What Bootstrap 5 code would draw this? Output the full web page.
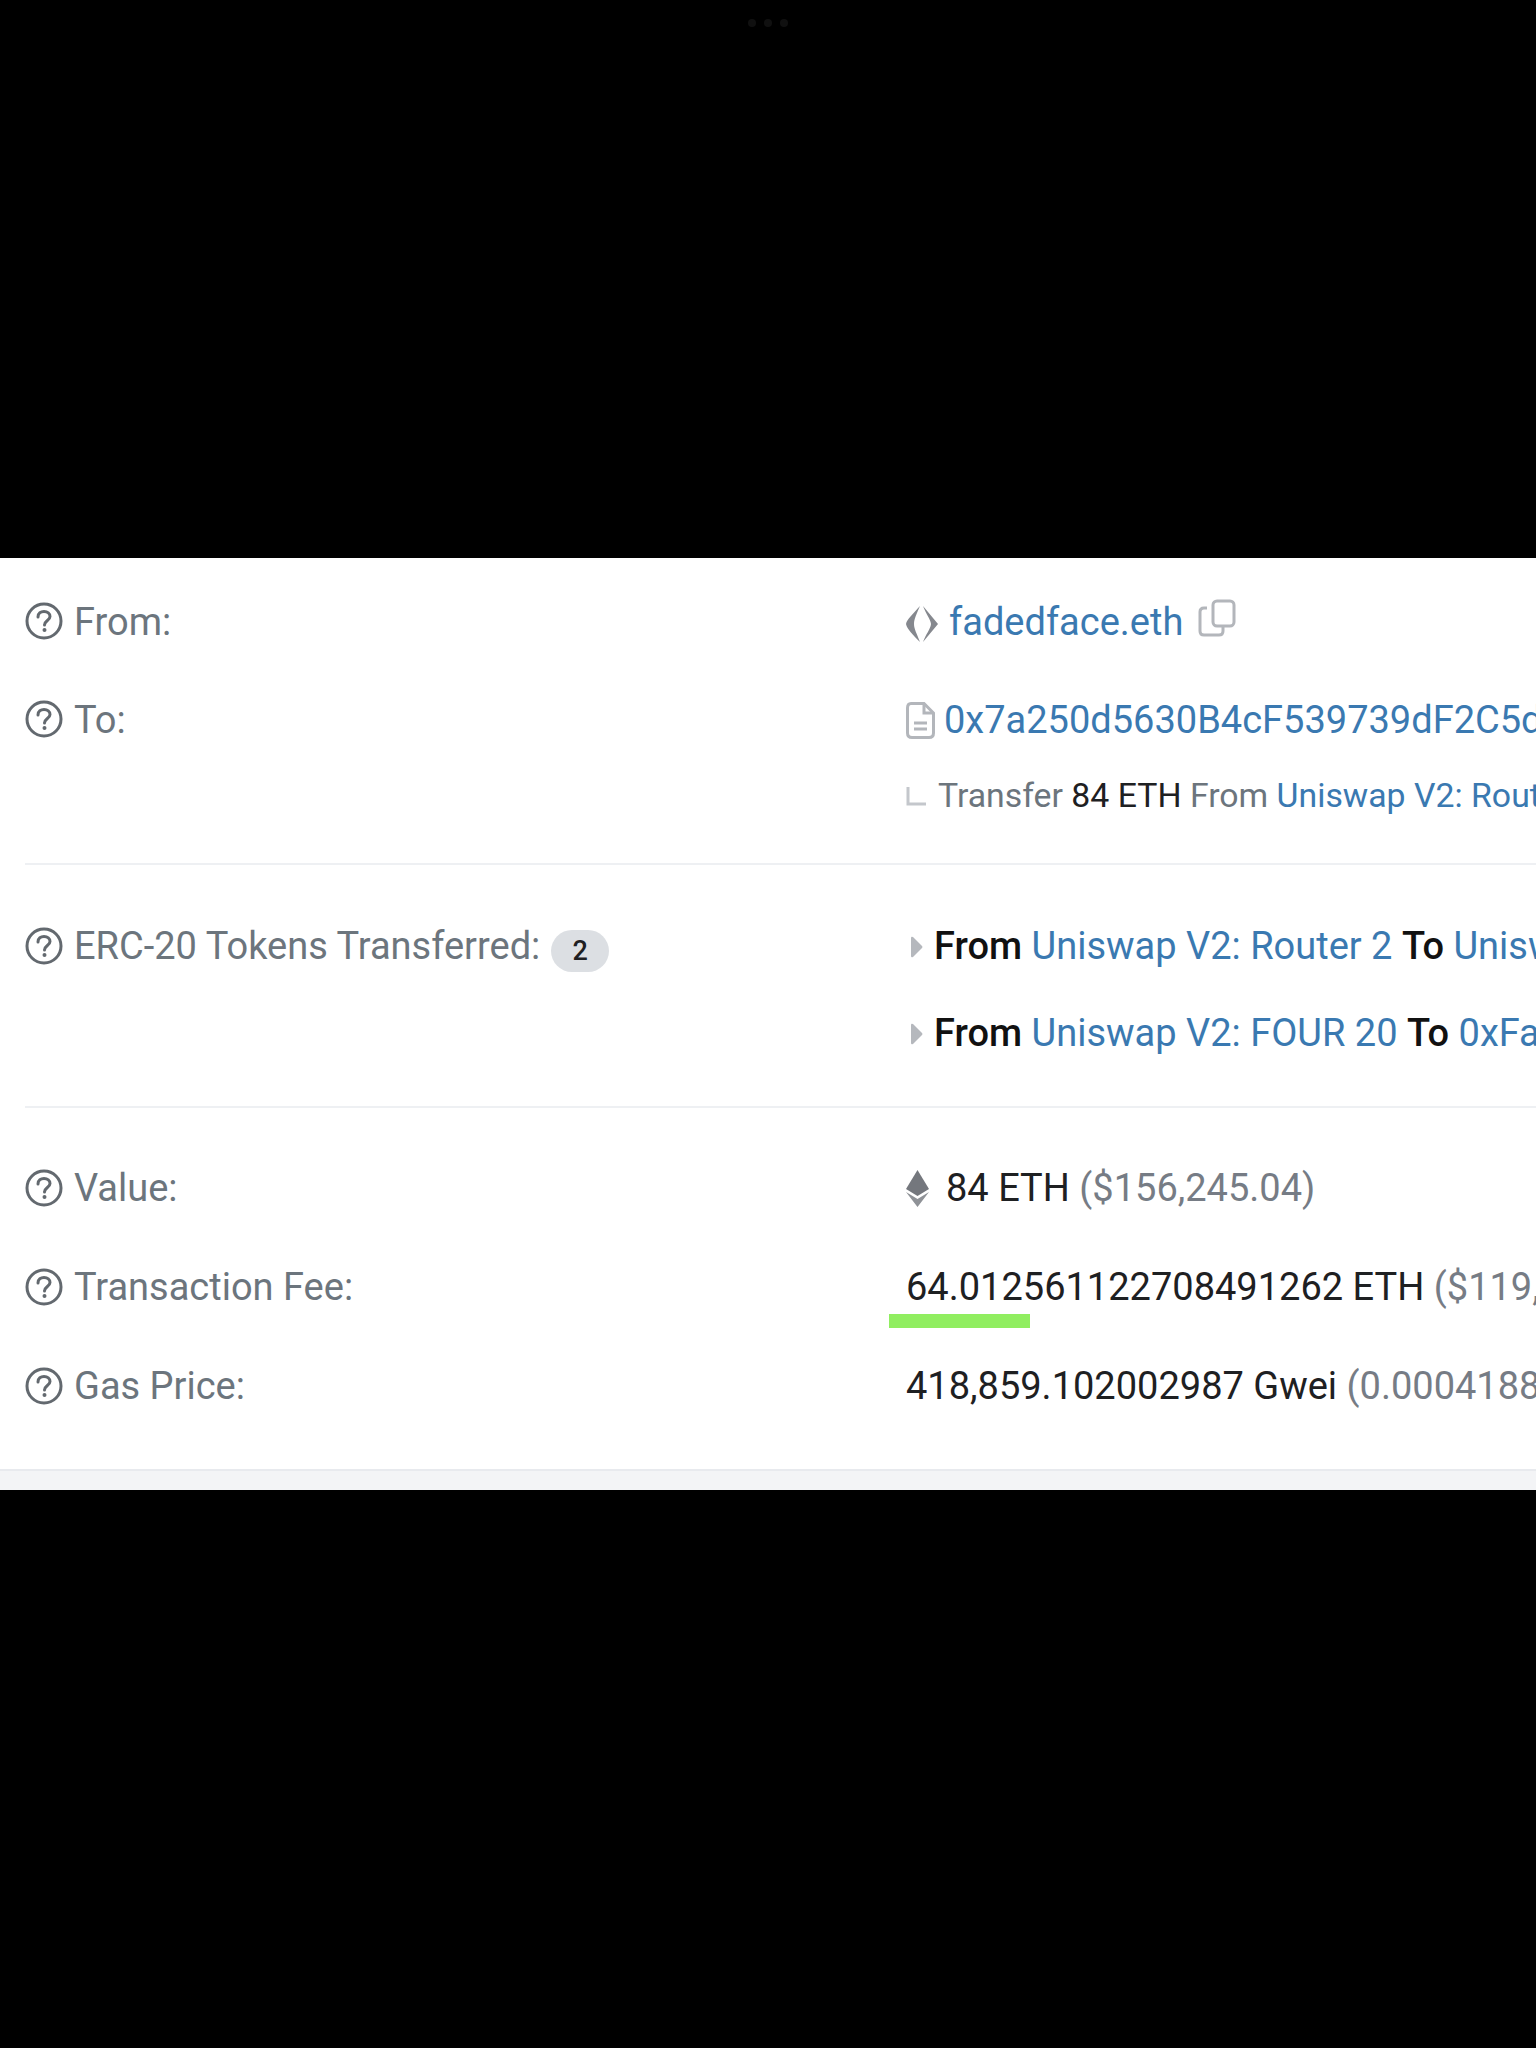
<!DOCTYPE html>
<html lang="en">
<head>
  <meta charset="UTF-8">
  <meta name="viewport" content="width=device-width, initial-scale=1.0">
  <title>Transaction details</title>
  <link rel="stylesheet" href="https://cdn.jsdelivr.net/npm/bootstrap@5.3.0/dist/css/bootstrap.min.css">
  <style>
    body { background: #000; font-family: Roboto, "Liberation Sans", sans-serif; font-size: 38px; color: #1e2022; }
    .top-black { height: 558px; padding-top: 19px; }
    .dot { width: 8px; height: 8px; border-radius: 50%; background: #101010; }
    .tx-card { background: #fff; padding-top: 15px; overflow: hidden; }
    .tx-row { height: 98px; }
    .tx-row-last { height: 99px; }
    .tx-row-sub { height: 54px; margin-bottom: 40px; }
    .tx-row-token { height: 87px; }
    .tx-gap-a { margin-bottom: 38px; }
    .tx-gap-b { margin-bottom: 29px; }
    .tx-gap-c { margin-bottom: 31px; }
    .tx-label { flex: 0 0 906px; padding-left: 25px; color: #6c757d; display: flex; align-items: center; gap: 11px; }
    .tx-label-inner { display: flex; align-items: center; gap: 11px; }
    .tx-label svg { flex: none; margin-top: -2px; }
    .tx-value { display: flex; align-items: center; white-space: nowrap; }
    a { color: #3a79b1; text-decoration: none; }
    .muted { color: #767c85; }
    .tx-line { height: 2px; background: #eef0f3; margin-left: 25px; }
    .ico-gray { flex: none; }
    .ico-ens { margin: 3px 11px 0 0; }
    .ico-copy { margin: -8px 0 0 15px; }
    .ico-file { margin-right: 9px; }
    .ico-corner { margin: 0 12px 0 0; }
    .ico-arrow { margin: 0 11px 0 4px; }
    .ico-eth { margin-right: 17px; }
    .tx-sub-text { font-size: 33.8px; color: #6c757d; }
    .tx-sub-text b { font-weight: 400; color: #1e2022; }
    .tx-strong { font-weight: 500; color: #111; }
    .count-pill { background: #dcdfe3; color: #1e2022; font-size: 27px; font-weight: 500; width: 58px; height: 42px; border-radius: 21px; display: flex; align-items: center; justify-content: center; margin-top: 9px; }
    .green-mark { position: absolute; left: -17px; top: 55px; width: 141px; height: 14px; background: #90ee60; }
    .tx-fee { position: relative; }
    .tx-spacer { height: 33px; }
    .tx-foot { height: 21px; background: #f3f4f6; border-top: 2px solid #e8eaee; }
  </style>
</head>
<body>
  <div class="top-black d-flex justify-content-center gap-2">
    <span class="dot"></span><span class="dot"></span><span class="dot"></span>
  </div>

  <div class="tx-card">
    <div class="d-flex tx-row">
      <div class="tx-label">
        <svg width="38" height="38" viewBox="0 0 38 38"><use href="#q"/></svg>From:
      </div>
      <div class="tx-value">
        <svg class="ico-gray ico-ens" width="32" height="36" viewBox="0 0 32 36">
          <path d="M14 0 C7 8 1 13 0 18 C1 23 7 29 14 36 C11 28 8 23 8 18 C8 13 11 7 14 0Z" fill="#85888e"/>
          <path d="M17 0 L32 18 L17 36 C20 28 24.500 23 25 18 C24.500 13 20 8 17 0Z" fill="#85888e"/>
        </svg>
        <a href="#">fadedface.eth</a>
        <svg class="ico-gray ico-copy" width="38" height="38" viewBox="0 0 38 38" fill="none" stroke="#b3b6bb" stroke-width="3">
          <rect x="15" y="2" width="21" height="25" rx="4"/>
          <path d="M9 9 H6 Q2 9 2 13 V32 Q2 36 6 36 H21 Q25 36 25 32 V27"/>
        </svg>
      </div>
    </div>

    <div class="d-flex tx-row">
      <div class="tx-label">
        <svg width="38" height="38" viewBox="0 0 38 38"><use href="#q"/></svg>To:
      </div>
      <div class="tx-value">
        <svg class="ico-gray ico-file" width="29" height="37" viewBox="0 0 29 37" fill="none" stroke="#b3b6bb" stroke-width="3">
          <path d="M5 1.5 H18 L27.5 11 V31 Q27.5 35.5 23 35.5 H6 Q1.5 35.5 1.5 31 V6 Q1.5 1.500 5 1.5Z"/>
          <path d="M18 2 V11 H27"/>
          <path d="M8 21 H21 M8 27 H21"/>
        </svg>
        <a href="#">0x7a250d5630B4cF539739dF2C5d</a>
      </div>
    </div>

    <div class="d-flex tx-row-sub">
      <div class="tx-label"></div>
      <div class="tx-value tx-sub-text">
        <svg class="ico-gray ico-corner" width="20" height="19" viewBox="0 0 20 19" fill="none" stroke="#c4c7cc" stroke-width="3">
          <path d="M2 0 V17 H20"/>
        </svg>
        Transfer&nbsp;<b>84 ETH</b>&nbsp;From&nbsp;<a href="#">Uniswap V2: Router 2</a>
      </div>
    </div>

    <div class="tx-line tx-gap-a"></div>

    <div class="d-flex tx-gap-b">
      <div class="tx-label align-items-start">
        <div class="tx-label-inner tx-row-token">
          <svg width="38" height="38" viewBox="0 0 38 38"><use href="#q"/></svg>ERC-20 Tokens Transferred:
          <span class="count-pill">2</span>
        </div>
      </div>
      <div class="d-flex flex-column">
        <div class="tx-value tx-row-token">
          <svg class="ico-gray ico-arrow" width="13" height="22" viewBox="0 0 13 22"><path d="M1 2 Q1 0 3 1 L12 10 Q13 11 12 12 L3 21 Q1 22 1 20Z" fill="#b5b8bd"/></svg>
          <span class="tx-strong">From</span>&nbsp;<a href="#">Uniswap V2: Router 2</a>&nbsp;<span class="tx-strong">To</span>&nbsp;<a href="#">Uniswap V2: FOUR 20</a>
        </div>
        <div class="tx-value tx-row-token">
          <svg class="ico-gray ico-arrow" width="13" height="22" viewBox="0 0 13 22"><path d="M1 2 Q1 0 3 1 L12 10 Q13 11 12 12 L3 21 Q1 22 1 20Z" fill="#b5b8bd"/></svg>
          <span class="tx-strong">From</span>&nbsp;<a href="#">Uniswap V2: FOUR 20</a>&nbsp;<span class="tx-strong">To</span>&nbsp;<a href="#">0xFa</a>
        </div>
      </div>
    </div>

    <div class="tx-line tx-gap-c"></div>

    <div class="d-flex tx-row-last">
      <div class="tx-label">
        <svg width="38" height="38" viewBox="0 0 38 38"><use href="#q"/></svg>Value:
      </div>
      <div class="tx-value">
        <svg class="ico-gray ico-eth" width="23" height="37" viewBox="0 0 23 37">
          <path d="M11.5 0 L23 19 L11.5 26 L0 19Z" fill="#74777d"/>
          <path d="M0 22 L11.5 29 L23 22 L11.5 37Z" fill="#8f9297"/>
        </svg>
        84 ETH&nbsp;<span class="muted">($156,245.04)</span>
      </div>
    </div>

    <div class="d-flex tx-row-last">
      <div class="tx-label">
        <svg width="38" height="38" viewBox="0 0 38 38"><use href="#q"/></svg>Transaction Fee:
      </div>
      <div class="tx-value">
        <span class="tx-fee">64.012561122708491262<span class="green-mark"></span></span>&nbsp;ETH&nbsp;<span class="muted">($119,</span>
      </div>
    </div>

    <div class="d-flex tx-row-last">
      <div class="tx-label">
        <svg width="38" height="38" viewBox="0 0 38 38"><use href="#q"/></svg>Gas Price:
      </div>
      <div class="tx-value">
        418,859.102002987 Gwei&nbsp;<span class="muted">(0.0004188</span>
      </div>
    </div>

    <div class="tx-spacer"></div>
    <div class="tx-foot"></div>
  </div>

  <svg width="0" height="0" class="position-absolute">
    <defs>
      <g id="q" fill="none" stroke="#63696f">
        <circle cx="19" cy="19" r="17" stroke-width="3"/>
        <path d="M13 15 C13 11 16 9.500 19 9.500 C22.500 9.500 25 11.500 25 14.500 C25 18.500 19.500 18.500 19.500 23" stroke-width="3" stroke-linecap="round"/>
        <circle cx="19.500" cy="28" r="2" fill="#63696f" stroke="none"/>
      </g>
    </defs>
  </svg>

  <script src="https://cdn.jsdelivr.net/npm/bootstrap@5.3.0/dist/js/bootstrap.bundle.min.js"></script>
</body>
</html>
